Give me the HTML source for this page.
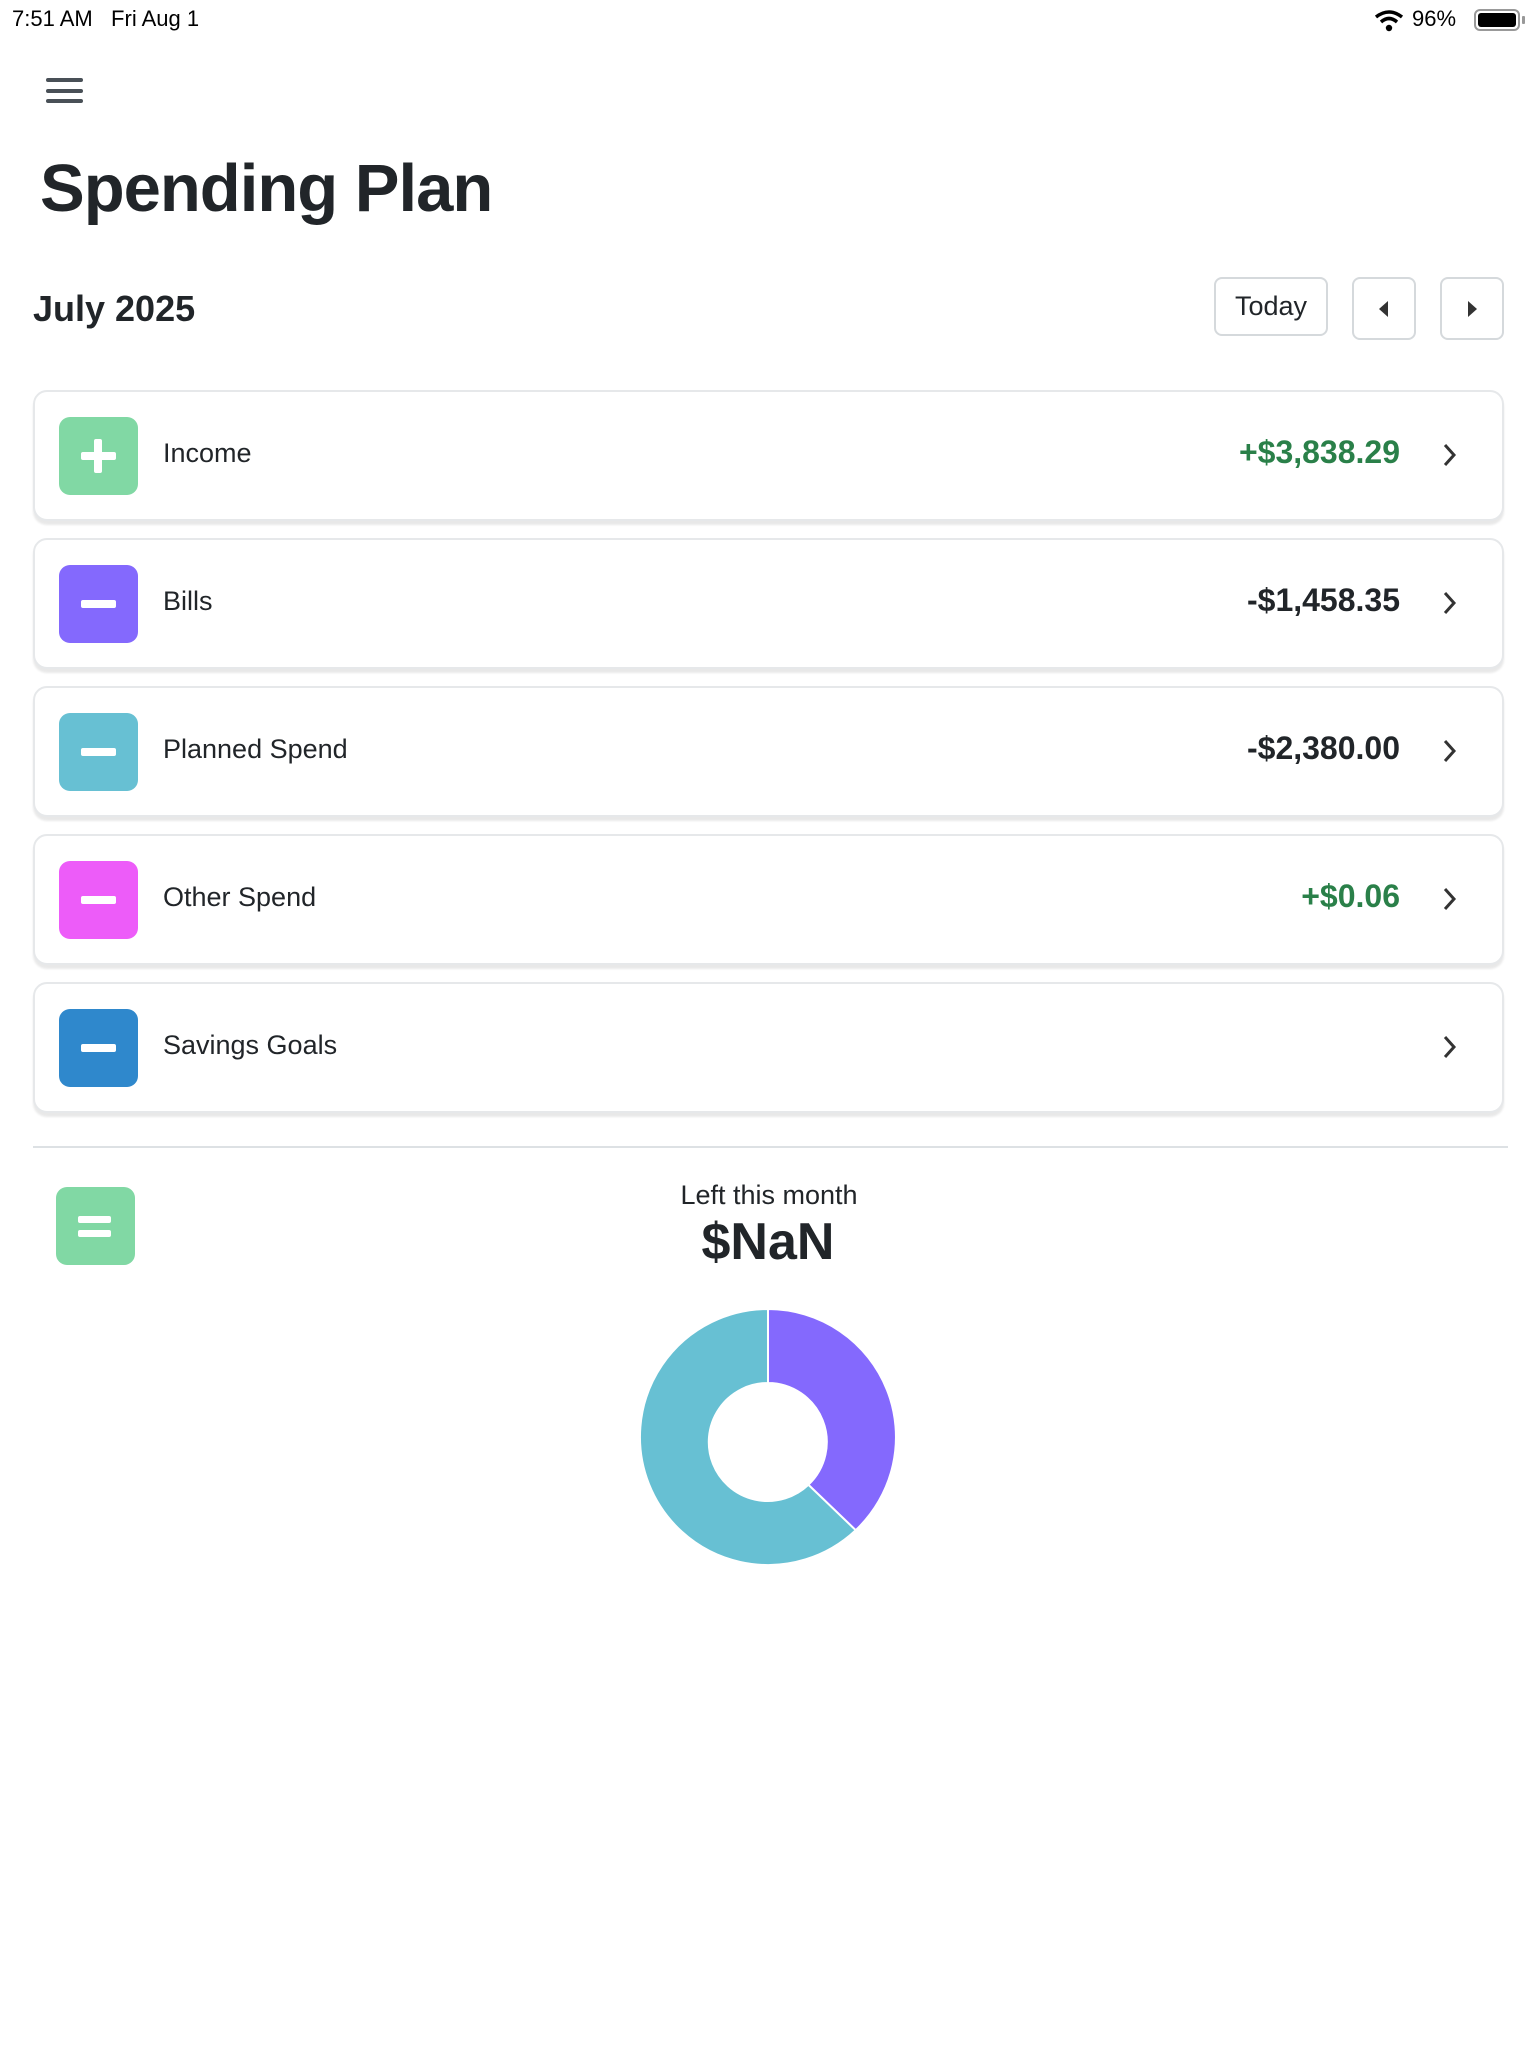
<!DOCTYPE html>
<html><head><meta charset="utf-8"><style>
*{margin:0;padding:0;box-sizing:border-box}
body{width:1536px;height:2048px;background:#fff;font-family:"Liberation Sans",sans-serif;color:#212529;position:relative;overflow:hidden}
.a{position:absolute}
.sb{top:6px;font-size:22px;color:#000}
.btn{position:absolute;border:2px solid #d5d9dc;border-radius:8px;background:#fff;display:flex;align-items:center;justify-content:center}
.card{position:absolute;left:33px;width:1471px;height:131px;border:2px solid #e6e8ea;border-radius:14px;box-shadow:0 4px 2px rgba(0,0,0,0.09);background:#fff}
.ic{position:absolute;left:24px;top:25px;width:79px;height:78px;border-radius:11px}
.ic .h{position:absolute;left:22px;top:35px;width:35px;height:8px;background:#fff;border-radius:2px}
.ic .v{position:absolute;left:35px;top:22px;width:8px;height:34px;background:#fff;border-radius:2px}
.lb{position:absolute;left:128px;top:46px;font-size:27px;color:#212529}
.am{position:absolute;right:102px;top:42px;font-size:32px;font-weight:bold}
.ch{position:absolute;right:44px;top:50px}
</style></head><body>
<div class="a sb" style="left:12px">7:51 AM&nbsp;&nbsp;&nbsp;Fri Aug 1</div>
<div class="a sb" style="left:1412px">96%</div>
<svg class="a" style="left:1374px;top:9px" width="30" height="24" viewBox="0 0 30 24"><path d="M2 8 Q15 -2 28 8" stroke="#000" stroke-width="3.5" fill="none"/><path d="M7 13 Q15 6 23 13" stroke="#000" stroke-width="3.5" fill="none"/><circle cx="15" cy="19" r="3.2" fill="#000"/></svg>
<div class="a" style="left:1474px;top:9px;width:46px;height:22px;border:2px solid #999;border-radius:6px;padding:2px"><div style="width:100%;height:100%;background:#000;border-radius:3px"></div></div>
<div class="a" style="left:1522px;top:16px;width:3px;height:8px;background:#999;border-radius:1px"></div>

<div class="a" style="left:46px;top:78px;width:37px;height:4px;background:#495057;border-radius:2px"></div>
<div class="a" style="left:46px;top:89px;width:37px;height:4px;background:#495057;border-radius:2px"></div>
<div class="a" style="left:46px;top:99px;width:37px;height:4px;background:#495057;border-radius:2px"></div>

<div class="a" style="left:40px;top:150px;font-size:67px;font-weight:bold;letter-spacing:-1px">Spending Plan</div>
<div class="a" style="left:33px;top:288px;font-size:36px;font-weight:bold">July 2025</div>
<div class="btn" style="left:1214px;top:277px;width:114px;height:59px;font-size:27px">Today</div>
<div class="btn" style="left:1352px;top:277px;width:64px;height:63px"><svg width="14" height="18"><path d="M11 1 L2 9 L11 17Z" fill="#333"/></svg></div>
<div class="btn" style="left:1440px;top:277px;width:64px;height:63px"><svg width="14" height="18"><path d="M3 1 L12 9 L3 17Z" fill="#333"/></svg></div>

<div class="card" style="top:390px"><div class="ic" style="background:#81d8a4"><div class="h"></div><div class="v"></div></div><div class="lb">Income</div><div class="am" style="color:#2a8049">+$3,838.29</div><svg class="ch" width="16" height="26"><path d="M3 3 L12 13 L3 23" stroke="#333" stroke-width="3" fill="none"/></svg></div>
<div class="card" style="top:538px"><div class="ic" style="background:#8469fd"><div class="h"></div></div><div class="lb">Bills</div><div class="am">-$1,458.35</div><svg class="ch" width="16" height="26"><path d="M3 3 L12 13 L3 23" stroke="#333" stroke-width="3" fill="none"/></svg></div>
<div class="card" style="top:686px"><div class="ic" style="background:#67c0d3"><div class="h"></div></div><div class="lb">Planned Spend</div><div class="am">-$2,380.00</div><svg class="ch" width="16" height="26"><path d="M3 3 L12 13 L3 23" stroke="#333" stroke-width="3" fill="none"/></svg></div>
<div class="card" style="top:834px"><div class="ic" style="background:#ed5cf9"><div class="h"></div></div><div class="lb">Other Spend</div><div class="am" style="color:#2a8049">+$0.06</div><svg class="ch" width="16" height="26"><path d="M3 3 L12 13 L3 23" stroke="#333" stroke-width="3" fill="none"/></svg></div>
<div class="card" style="top:982px"><div class="ic" style="background:#2f88cc"><div class="h"></div></div><div class="lb">Savings Goals</div><svg class="ch" width="16" height="26"><path d="M3 3 L12 13 L3 23" stroke="#333" stroke-width="3" fill="none"/></svg></div>

<div class="a" style="left:33px;top:1146px;width:1475px;height:2px;background:#dde1e4"></div>
<div class="a" style="left:56px;top:1187px;width:79px;height:78px;border-radius:11px;background:#81d8a4"><div class="a" style="left:22px;top:29px;width:33px;height:7px;background:#fff;border-radius:2px"></div><div class="a" style="left:22px;top:43px;width:33px;height:7px;background:#fff;border-radius:2px"></div></div>
<div class="a" style="left:0;width:1536px;text-align:center;top:1180px;font-size:27px;padding-left:2px">Left this month</div>
<div class="a" style="left:0;width:1536px;text-align:center;top:1212px;font-size:52px;font-weight:bold">$NaN</div>

<svg class="a" style="left:0;top:0" width="1536" height="2048">
<path d="M768 1309 A128 128 0 0 1 855.7 1530.2 L808.4 1484.8 A59 59 0 0 0 768 1383 Z" fill="#8469fd" stroke="#fff" stroke-width="2"/>
<path d="M855.7 1530.2 A128 128 0 1 1 768 1309 L768 1383 A59 59 0 1 0 808.4 1484.8 Z" fill="#67c0d3" stroke="#fff" stroke-width="2"/>
</svg>
</body></html>
